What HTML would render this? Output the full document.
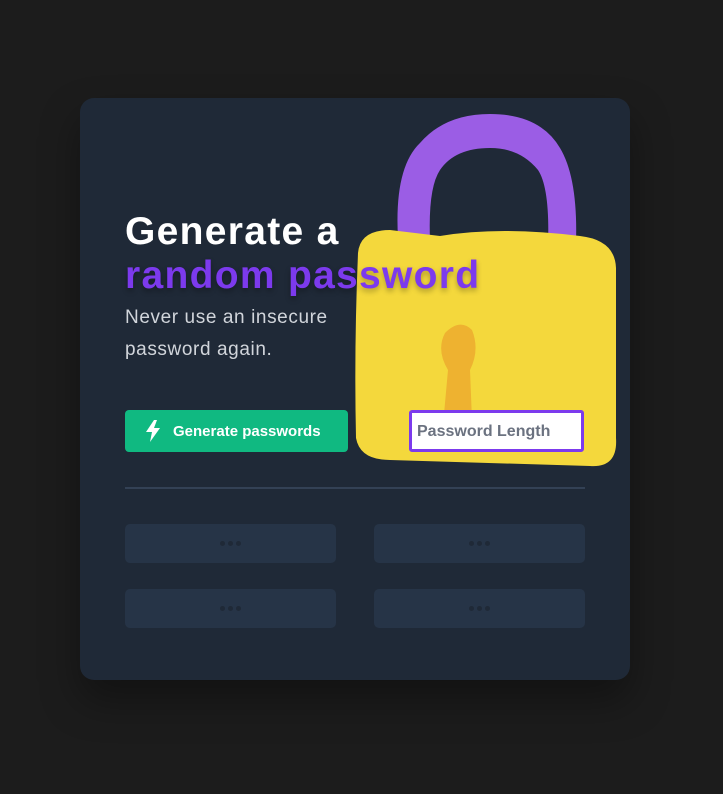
<!DOCTYPE html>
<html><head><meta charset="utf-8">
<style>
html,body{margin:0;padding:0}
body{width:723px;height:794px;background:#1c1c1c;position:relative;overflow:hidden;font-family:"Liberation Sans",sans-serif}
.card{position:absolute;left:80px;top:98px;width:550px;height:582px;background:#1f2937;border-radius:14px;box-shadow:0 20px 40px rgba(0,0,0,.35);overflow:hidden}
.lock{position:absolute;left:270px;top:10px}
h1{position:absolute;left:45px;top:112px;margin:0;font-size:39px;line-height:44px;font-weight:bold;color:#fff;letter-spacing:1.3px}
h1 span{color:#7c3aed;text-shadow:0 3px 6px rgba(0,0,0,.3)}
p{position:absolute;left:45px;top:204px;margin:0;font-size:19px;line-height:32px;color:#d1d5db;letter-spacing:0.6px}
.btn{position:absolute;left:45px;top:312px;width:223px;height:42px;background:#10b981;border-radius:4px;color:#fff;font-size:15px;font-weight:bold;display:flex;align-items:center}
.btn svg{margin:0 12px 0 20px}
.inp{position:absolute;left:329px;top:312px;width:164px;height:36px;border:3px solid #7c3aed;background:#fff;border-radius:3px;color:#6b7280;font-size:16px;font-weight:bold;line-height:38px;padding-left:5px}
.hr{position:absolute;left:45px;top:389px;width:460px;height:2px;background:#334155}
.ph{position:absolute;width:211px;height:39px;background:#263447;border-radius:5px;display:flex;justify-content:center;align-items:center;gap:3px}
.ph i{width:5px;height:5px;border-radius:50%;background:#1f2937;display:block}
</style></head><body>
<div class="card">
<svg class="lock" width="280" height="370" viewBox="0 0 280 370">
<path d="M48 130 Q44 60 70 35 Q95 6 140 6 Q190 6 210 40 Q228 70 226 135 L198 138 Q200 80 188 62 Q170 40 140 40 Q105 40 90 62 Q78 80 80 132 Z" fill="#9b5de5"/>
<path d="M8 145 Q10 122 40 122 L90 128 Q150 118 230 128 Q265 132 266 160 L266 330 Q268 360 240 358 L40 352 Q10 352 6 330 Q4 240 8 145 Z" fill="#f4d83c"/>
<path d="M95 225 Q110 210 122 222 Q130 242 120 262 L122 312 Q106 322 94 306 L98 262 Q86 242 95 225 Z" fill="#eeb230"/>
</svg>
<h1>Generate a<br><span>random password</span></h1>
<p>Never use an insecure<br>password again.</p>
<div class="btn"><svg width="16" height="22" viewBox="0 0 16 22"><path d="M9 0 L1 12 H7 L5 22 L15 8 H9 L12 0 Z" fill="#fff"/></svg>Generate passwords</div>
<div class="inp">Password Length</div>
<div class="hr"></div>
<div class="ph" style="left:45px;top:426px"><i></i><i></i><i></i></div>
<div class="ph" style="left:294px;top:426px"><i></i><i></i><i></i></div>
<div class="ph" style="left:45px;top:491px"><i></i><i></i><i></i></div>
<div class="ph" style="left:294px;top:491px"><i></i><i></i><i></i></div>
</div>
</body></html>
